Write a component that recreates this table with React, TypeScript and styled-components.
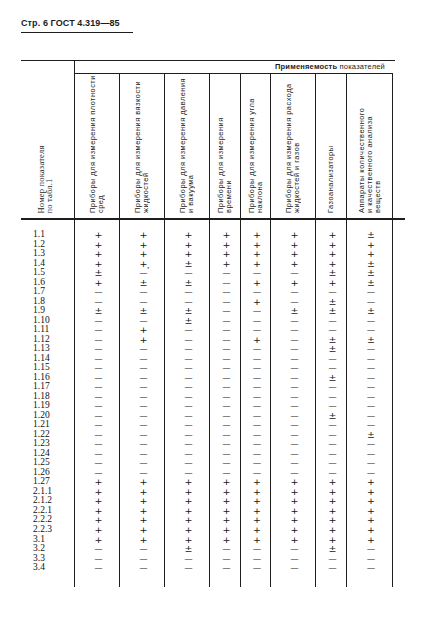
import styled, { createGlobalStyle } from 'styled-components'

const GlobalStyle = createGlobalStyle`
  html, body {
    margin: 0;
    background: #fff;
  }
  body {
    font-family: 'Liberation Serif', 'Times New Roman', serif;
    color: #1c1c1c;
  }
`

const COLS = '54px 45px 45px 45px 31px 30px 45px 31px 46px'
const INK = '#1e1e1e'

const Page = styled.div`
  width: 424px;
  height: 631px;
  box-sizing: border-box;
  padding: 18px 0 0 21px;
  display: flex;
  flex-direction: column;
  align-items: flex-start;
`

const Title = styled.div`
  font-family: 'Liberation Sans', Arial, sans-serif;
  font-weight: 700;
  font-size: 9px;
  line-height: 11px;
  letter-spacing: 0.1px;
  padding: 0 13px 3px 0;
  border-bottom: 1.5px solid ${INK};
`

const Table = styled.div`
  margin-top: 27px;
  width: 374px;
  border-top: 1.5px solid ${INK};
`

const Head = styled.div`
  display: grid;
  grid-template-columns: ${COLS};
  grid-template-rows: 12.5px 144px;
  width: 384px;
  border-bottom: 2px solid ${INK};
`

const NumHead = styled.div`
  grid-row: 1 / span 2;
  border-right: 1px solid ${INK};
  display: flex;
  justify-content: center;
  padding: 0 6px 4px 0;
`

const Applicability = styled.div`
  grid-column: 2 / span 8;
  border-bottom: 1px solid ${INK};
  font-family: 'Liberation Sans', Arial, sans-serif;
  font-size: 7.5px;
  line-height: 12px;
  letter-spacing: 0.2px;
  text-align: right;
  padding-right: 8px;

  b {
    font-weight: 700;
  }
`

const SubHead = styled.div`
  border-right: 1px solid ${INK};
  display: flex;
  justify-content: center;
  padding: 4px 0 5px;
`

const Vertical = styled.div<{ $serif?: boolean }>`
  writing-mode: vertical-rl;
  transform: rotate(180deg);
  white-space: nowrap;
  text-align: start;
  font-family: ${({ $serif }) =>
    $serif ? "'Liberation Serif', serif" : "'Liberation Sans', Arial, sans-serif"};
  font-size: ${({ $serif }) => ($serif ? '8.5px' : '7.4px')};
  line-height: 8px;
  letter-spacing: ${({ $serif }) => ($serif ? '0.2px' : '0.5px')};
`

const Body = styled.div`
  display: grid;
  grid-template-columns: ${COLS};
`

const Column = styled.div<{ $numbers?: boolean }>`
  display: grid;
  grid-auto-rows: 9.53px;
  justify-items: ${({ $numbers }) => ($numbers ? 'start' : 'center')};
  padding: 10.5px 0 14.5px ${({ $numbers }) => ($numbers ? '12px' : '3px')};
  border-right: 1px solid ${INK};
`

const RowNum = styled.div`
  line-height: 9.53px;
  font-size: 9.5px;
  color: #111;
`

const Mark = styled.div<{ $dash?: boolean }>`
  position: relative;
  line-height: 9.53px;
  font-family: ${({ $dash }) =>
    $dash ? "'Liberation Sans', Arial, sans-serif" : "'DejaVu Sans', sans-serif"};
  font-size: ${({ $dash }) => ($dash ? '7.5px' : '9.5px')};
  color: #161616;
`

const Note = styled.span`
  position: absolute;
  left: 100%;
  top: -3px;
  font-size: 5px;
`

const rowLabels = [
  ...Array.from({ length: 27 }, (_, i) => `1.${i + 1}`),
  '2.1.1',
  '2.1.2',
  '2.2.1',
  '2.2.2',
  '2.2.3',
  '3.1',
  '3.2',
  '3.3',
  '3.4',
]

const tail = (mid: string) => '+'.repeat(7) + mid

const columns = [
  {
    lines: ['Приборы для измерения плотности', 'сред'],
    marks: '++++p+--p' + '-'.repeat(17) + tail('---'),
  },
  {
    lines: ['Приборы для измерения вязкости', 'жидкостей'],
    marks: '++++*p--p-++' + '-'.repeat(14) + tail('---'),
  },
  {
    lines: ['Приборы для измерения давления', 'и вакуума'],
    marks: '+++p-p--pp' + '-'.repeat(16) + tail('p--'),
  },
  {
    lines: ['Приборы для измерения', 'времени'],
    marks: '++++' + '-'.repeat(22) + tail('---'),
  },
  {
    lines: ['Приборы для измерения угла', 'наклона'],
    marks: '++++-+-+---+' + '-'.repeat(14) + tail('---'),
  },
  {
    lines: ['Приборы для измерения расхода', 'жидкостей и газов'],
    marks: '++++-+--p--' + '-'.repeat(15) + tail('---'),
  },
  {
    lines: ['Газоанализаторы'],
    marks: '++++p+-pp--pp--p---p' + '-'.repeat(6) + tail('p--'),
  },
  {
    lines: ['Аппараты количественного', 'и качественного анализа', 'веществ'],
    marks: 'p++ppp--p--p' + '-'.repeat(9) + 'p' + '-'.repeat(4) + tail('---'),
  },
]

const glyph = (c: string) => (c === '+' ? '+' : c === 'p' ? '±' : '—')

const App = () => {
  return (
    <Page>
      <GlobalStyle />
      <Title>Стр. 6 ГОСТ 4.319—85</Title>
      <Table>
        <Head>
          <NumHead>
            <Vertical $serif>
              Номер показателя
              <br />
              по табл.1
            </Vertical>
          </NumHead>
          <Applicability>
            <b>Применяемость</b> показателей
          </Applicability>
          {columns.map((col, i) => (
            <SubHead key={i}>
              <Vertical>
                {col.lines.map((line, j) => (
                  <div key={j}>{line}</div>
                ))}
              </Vertical>
            </SubHead>
          ))}
        </Head>
        <Body>
          <Column $numbers>
            {rowLabels.map((label) => (
              <RowNum key={label}>{label}</RowNum>
            ))}
          </Column>
          {columns.map((col, i) => (
            <Column key={i}>
              {col.marks.split('').map((c, j) => (
                <Mark key={j} $dash={c === '-' || c === '*'}>
                  {glyph(c)}
                  {c === '*' && <Note>*</Note>}
                </Mark>
              ))}
            </Column>
          ))}
        </Body>
      </Table>
    </Page>
  )
}

export default App
